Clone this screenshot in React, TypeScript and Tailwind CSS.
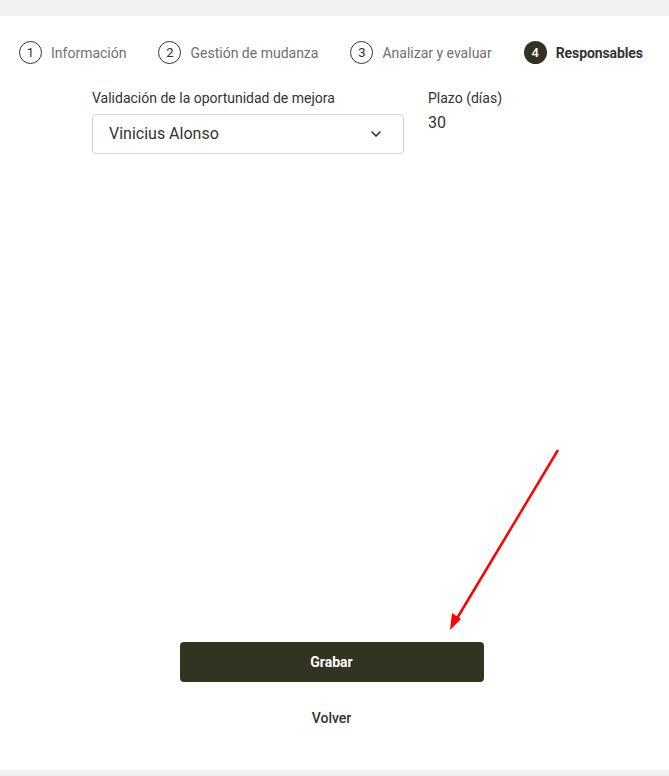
import { ChevronDown } from 'lucide-react';

const steps = [
  { n: 1, label: 'Información' },
  { n: 2, label: 'Gestión de mudanza' },
  { n: 3, label: 'Analizar y evaluar' },
  { n: 4, label: 'Responsables', active: true },
];

export default function App() {
  return (
    <div className="relative flex h-[776px] w-[669px] flex-col bg-[#f2f2f2] font-['Roboto',sans-serif]">
      <div className="mt-4 mb-1.5 flex flex-1 flex-col bg-white">
        {/* stepper */}
        <div className="flex items-center gap-8 pl-[19px] pt-[25px]">
          {steps.map((s) =>
            s.active ? (
              <div key={s.n} className="flex items-center gap-[9px]">
                <span className="flex h-[23px] w-[23px] items-center justify-center rounded-full bg-[#333322] text-[13px] font-medium text-white">
                  {s.n}
                </span>
                <span className="text-sm font-bold tracking-[-0.1px] text-[#333333]">{s.label}</span>
              </div>
            ) : (
              <div key={s.n} className="flex items-center gap-[9px]">
                <span className="flex h-[23px] w-[23px] items-center justify-center rounded-full border border-[#333333] text-[13px] text-[#333333]">
                  {s.n}
                </span>
                <span className="text-sm text-[#6f6f6f]">{s.label}</span>
              </div>
            )
          )}
        </div>

        {/* form */}
        <div className="mt-[25px] flex gap-[24px] pl-[92px]">
          <div className="flex w-[312px] flex-col">
            <label className="text-sm leading-[18px] text-[#333333]">Validación de la oportunidad de mejora</label>
            <div className="mt-[7px] flex h-10 items-center justify-between rounded border border-[#d4d4d4] pl-[16px] pr-[19px]">
              <span className="text-base text-[#333333]">Vinicius Alonso</span>
              <ChevronDown size={16} strokeWidth={2.5} className="text-[#333333]" />
            </div>
          </div>
          <div className="flex flex-col">
            <span className="text-sm leading-[18px] text-[#333333]">Plazo (días)</span>
            <span className="mt-[4px] text-base text-[#333333]">30</span>
          </div>
        </div>

        <div className="flex-1" />

        {/* actions */}
        <div className="ml-[-6px] flex flex-col items-center pb-[42px]">
          <button className="flex h-10 w-[304px] items-center justify-center rounded bg-[#333322] text-sm font-bold text-white">
            Grabar
          </button>
          <button className="mt-[26px] text-sm font-medium text-[#333333]">Volver</button>
        </div>
      </div>

      {/* annotation arrow */}
      <svg className="pointer-events-none absolute left-0 top-0" width="669" height="776">
        <line x1="558" y1="450" x2="456" y2="620" stroke="#ff0000" strokeWidth="2.5" />
        <polygon points="450,630 452,613 461,619" fill="#ff0000" />
      </svg>
    </div>
  );
}
